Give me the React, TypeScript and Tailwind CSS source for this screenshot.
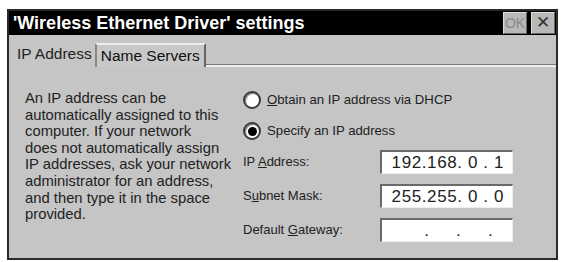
import React from "react";

const F = { fontFamily: '"Liberation Sans", Arial, sans-serif' };

function Radio({ checked }: { checked?: boolean }) {
  return (
    <div className="w-[18px] h-[18px] rounded-full bg-white border-2 border-[#3a3a3a] shadow-[inset_1px_1px_1px_#777] flex items-center justify-center shrink-0">
      {checked && <div className="w-[9px] h-[9px] rounded-full bg-black" />}
    </div>
  );
}

function Field({ value }: { value: string }) {
  return (
    <div className="w-[133px] h-[24px] bg-white border-t-2 border-l-2 border-[#6a6a6a] border-r border-b border-r-[#eee] border-b-[#eee] flex items-center justify-end pr-[8px] text-[17px] text-[#222] whitespace-pre tracking-[0.6px]">
      {value}
    </div>
  );
}

export default function App() {
  return (
    <div className="w-[562px] h-[262px] bg-white pt-[9px] pl-[7px]" style={F}>
      <div className="w-[551px] h-[251px] border-2 border-[#2a2a2a] bg-[#c5c5c5] flex flex-col">
        <div className="h-[24px] bg-black flex items-center pl-[4px] pr-[1px]">
          <span className="text-white font-bold text-[18px] leading-none">'Wireless Ethernet Driver' settings</span>
          <div className="ml-auto flex gap-[4px] h-[22px]">
            <div className="w-[24px] h-full bg-[#b8b8b8] border border-t-[#e0e0e0] border-l-[#e0e0e0] border-r-[#666] border-b-[#666] flex items-center justify-center text-[#8a8a8a] text-[14px]">OK</div>
            <div className="w-[24px] h-full bg-[#b8b8b8] border border-t-[#e0e0e0] border-l-[#e0e0e0] border-r-[#666] border-b-[#666] flex items-center justify-center text-[#333] text-[17px]">✕</div>
          </div>
        </div>
        <div className="h-[32px] flex items-end">
          <div className="h-[27px] pl-[8px] pr-[3px] flex items-center text-[15.5px] text-[#222]">IP Address</div>
          <div className="h-[24px] px-[4px] flex items-center text-[15.5px] text-[#111] border-t-2 border-l-2 border-r-2 border-t-[#eee] border-l-[#888] border-r-[#666] bg-[#c8c8c8]">Name Servers</div>
          <div className="flex-1 h-[3px] border-b-2 border-b-[#eee] border-t border-t-[#777]" />
        </div>
        <div className="flex-1 flex pt-[23px] pl-[16px]">
          <p className="w-[218px] text-[14.8px] leading-[16.6px] text-[#222] whitespace-nowrap">
            An IP address can be<br />
            automatically assigned to this<br />
            computer. If your network<br />
            does not automatically assign<br />
            IP addresses, ask your network<br />
            administrator for an address,<br />
            and then type it in the space<br />
            provided.
          </p>
          <div className="flex flex-col">
            <div className="flex items-center gap-[6px] h-[20px]">
              <Radio />
              <span className="text-[13.2px] text-[#222]"><span className="underline">O</span>btain an IP address via DHCP</span>
            </div>
            <div className="flex items-center gap-[6px] h-[20px] mt-[11px]">
              <Radio checked />
              <span className="text-[13.2px] text-[#222]">Specify an IP address</span>
            </div>
            <div className="flex flex-col gap-[10px] mt-[9px]">
              <div className="flex items-center justify-between w-[270px]">
                <span className="text-[13px] text-[#222]">IP <span className="underline">A</span>ddress:</span>
                <Field value="192.168. 0 . 1" />
              </div>
              <div className="flex items-center justify-between w-[270px]">
                <span className="text-[13px] text-[#222]">S<span className="underline">u</span>bnet Mask:</span>
                <Field value="255.255. 0 . 0" />
              </div>
              <div className="flex items-center justify-between w-[270px]">
                <span className="text-[13px] text-[#222]">Default <span className="underline">G</span>ateway:</span>
                <Field value="  .     .     .  " />
              </div>
            </div>
          </div>
        </div>
      </div>
    </div>
  );
}
